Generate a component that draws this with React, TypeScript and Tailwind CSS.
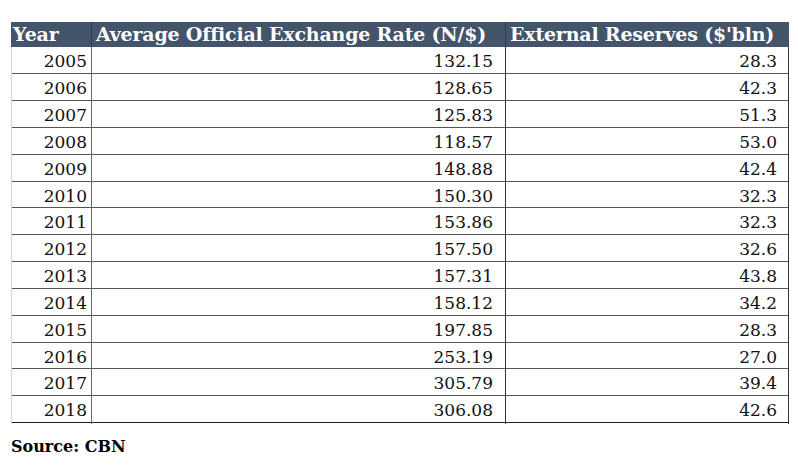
import React from "react";

const rows: [string, string, string][] = [
  ["2005", "132.15", "28.3"],
  ["2006", "128.65", "42.3"],
  ["2007", "125.83", "51.3"],
  ["2008", "118.57", "53.0"],
  ["2009", "148.88", "42.4"],
  ["2010", "150.30", "32.3"],
  ["2011", "153.86", "32.3"],
  ["2012", "157.50", "32.6"],
  ["2013", "157.31", "43.8"],
  ["2014", "158.12", "34.2"],
  ["2015", "197.85", "28.3"],
  ["2016", "253.19", "27.0"],
  ["2017", "305.79", "39.4"],
  ["2018", "306.08", "42.6"],
];

export default function App() {
  return (
    <div className="w-[798px] h-[471px] bg-white pt-[22px] pl-[11px]" style={{ fontFamily: '"DejaVu Serif", serif' }}>
      <div className="w-[778px]">
        <div className="grid grid-cols-[81px_414px_283px] h-[25px] bg-[#44546a] text-white font-bold text-[19px] leading-[25px] tracking-[-0.2px]">
          <div className="pl-[2px] border-r border-[#2f3b4a]">Year</div>
          <div className="pl-[4px] border-r border-[#2f3b4a] whitespace-nowrap">Average Official Exchange Rate (N/$)</div>
          <div className="pl-[4px] whitespace-nowrap">External Reserves ($'bln)</div>
        </div>
        {rows.map((r, i) => (
          <div
            key={r[0]}
            className={`grid grid-cols-[81px_414px_283px] text-[#111] text-[17px] leading-[28px] border-b ${i === 5 || i === 11 ? "h-[26px]" : "h-[27px]"} ${i === rows.length - 1 ? "border-[#222]" : "border-[#555]"}`}
          >
            <div className="text-right pr-[4px] border-l border-l-[#d0d7de] border-r border-r-[#666]">{r[0]}</div>
            <div className="text-right pr-[12px] border-r border-r-[#333]">{r[1]}</div>
            <div className="text-right pr-[11px] border-r border-r-[#333]">{r[2]}</div>
          </div>
        ))}
      </div>
      <div className="mt-[12px] font-bold text-[16px] text-black">Source: CBN</div>
    </div>
  );
}
